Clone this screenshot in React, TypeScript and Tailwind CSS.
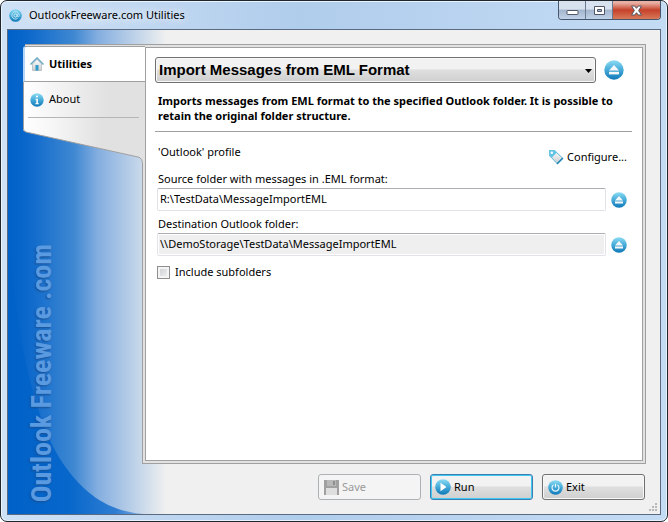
import { useState } from "react";

function EjectIcon({ className }: { className: string }) {
  return (
    <svg className={className} viewBox="0 0 20 20" aria-hidden="true">
      <circle cx="10" cy="10" r="9.7" fill="url(#aqua)" />
      <path d="M10 5 L15 10.6 H5 Z" fill="#f5f8fa" />
      <rect x="5" y="11.8" width="10" height="2.6" fill="#f5f8fa" />
    </svg>
  );
}

function SharedGradients() {
  return (
    <svg className="absolute size-0" aria-hidden="true">
      <defs>
        <linearGradient id="aqua" x1="0" y1="0" x2="0" y2="1">
          <stop offset="0" stopColor="#8cdcf4" />
          <stop offset="0.5" stopColor="#45aad8" />
          <stop offset="1" stopColor="#0f78b8" />
        </linearGradient>
        <linearGradient id="silver" x1="0" y1="0" x2="0" y2="1">
          <stop offset="0" stopColor="#ffffff" />
          <stop offset="1" stopColor="#c9ccce" />
        </linearGradient>
        <linearGradient id="tabFill" x1="0" y1="0" x2="1" y2="0">
          <stop offset="0" stopColor="#ffffff" />
          <stop offset="0.25" stopColor="#f6f6f6" />
          <stop offset="0.65" stopColor="#e1e1e1" />
          <stop offset="1" stopColor="#e1e1e1" />
        </linearGradient>
        <linearGradient id="swoosh" x1="0" y1="0" x2="1" y2="0">
          <stop offset="0" stopColor="#0061c8" />
          <stop offset="0.45" stopColor="#0767cb" />
          <stop offset="0.8" stopColor="#2f7dd2" />
          <stop offset="1" stopColor="#80ace0" />
        </linearGradient>
      </defs>
    </svg>
  );
}

function TitleBar() {
  return (
    <header className="flex h-[28px] items-start justify-between pl-[8px] pr-[6px]">
      <div className="flex h-[28px] items-center gap-[7px]">
        <svg className="size-[13px]" viewBox="0 0 13 13" aria-hidden="true">
          <circle cx="6.5" cy="6.5" r="6.3" fill="url(#aqua)" />
          <circle cx="6.5" cy="6.5" r="1.6" fill="none" stroke="#d5f0fb" />
          <path d="M8.2 4.8v2.3c0 1.3 2 1 2-.7a3.7 3.7 0 1 0-1.7 3.1" fill="none" stroke="#d5f0fb" strokeWidth="0.8" />
        </svg>
        <h1 className="[text-shadow:0_0_8px_#ffffff,0_0_12px_#ffffff]">OutlookFreeware.com Utilities</h1>
      </div>
      <div className="flex h-[19px] overflow-hidden rounded-b-[4px] border border-t-0 border-[#46566c]">
        <button aria-label="Minimize" className="flex w-[27px] items-center justify-center border-r border-[#6a7a90] bg-linear-to-b from-[#d8e2ee] from-45% via-[#a3b5cc] via-50% to-[#c0d2e8]">
          <svg className="h-[13px] w-[13px]" viewBox="0 0 13 13"><rect x="1" y="6.5" width="11" height="4" rx="0.5" fill="#fff" stroke="#535666" /></svg>
        </button>
        <button aria-label="Maximize" className="flex w-[27px] items-center justify-center border-r border-[#6a7a90] bg-linear-to-b from-[#d8e2ee] from-45% via-[#a3b5cc] via-50% to-[#c0d2e8]">
          <svg className="h-[13px] w-[13px]" viewBox="0 0 13 13"><path fillRule="evenodd" d="M1.5 2.5h10v8h-10zM4.5 5.5h4v2h-4z" fill="#fff" stroke="#535666" /></svg>
        </button>
        <button aria-label="Close" className="flex w-[47px] items-center justify-center bg-linear-to-b from-[#e8b0a4] from-10% via-[#c5402a] via-50% to-[#d87858]">
          <svg className="h-[13px] w-[13px]" viewBox="0 0 13 13"><path d="M1.5 2h3.2l1.8 2.300 1.800-2.300h3.200L8.600 6.500l2.900 4.500H8.300L6.500 8.700 4.700 11H1.500l2.900-4.500z" fill="#fff" stroke="#535666" /></svg>
        </button>
      </div>
    </header>
  );
}

function Sidebar() {
  return (
    <nav className="relative z-10 -mr-[3px] w-[122px] shrink-0">
      <div className="ml-[2px] h-[2px] border-t border-[#a0a0a0] bg-[#e1e1e1]" />
      <button className="flex h-[36px] w-full items-center gap-[5px] rounded-tl-[3px] border-y border-l-2 border-y-[#a0a0a0] border-l-[#b5d6f8] bg-white pl-[5px] font-bold">
        <svg className="size-[14px]" viewBox="0 0 14 14" aria-hidden="true">
          <path d="M2.500 7v6.500h9V7L7 2.500z" fill="url(#silver)" stroke="#a4abb0" strokeWidth="0.600" />
          <path d="M0.500 7.500 7 1l6.500 6.500" fill="none" stroke="#6da9c4" strokeWidth="1.500" />
          <path d="M5.500 8h3v5.500h-3z" fill="#2f9bcb" />
        </svg>
        Utilities
      </button>
      <div className="border-l border-[#a0a0a0] bg-linear-to-r from-white via-[#e1e1e1] via-70% to-[#e1e1e1] pl-[4px]">
        <button className="flex h-[36px] w-[111px] items-center gap-[5px] border-b border-[#b5b5b5] pl-[2px]">
          <svg className="size-[14px]" viewBox="0 0 14 14" aria-hidden="true">
            <circle cx="7" cy="7" r="6.700" fill="url(#aqua)" />
            <circle cx="7" cy="3.500" r="1.100" fill="#fff" />
            <path d="M5.500 5.800h2.400v4.400h1v1H5.300v-1h1V6.800h-.8z" fill="#fff" />
          </svg>
          About
        </button>
      </div>
      <svg className="block h-[46px] w-full" viewBox="0 0 122 46" aria-hidden="true">
        <path d="M0 0V11Q0 13 3 14L115 39Q119 40 119 46H122V0Z" fill="url(#tabFill)" />
        <path d="M0.500 0V11Q0.500 13 3 14L115 39Q119.500 40 119.500 46" fill="none" stroke="#a0a0a0" />
      </svg>
    </nav>
  );
}

function FolderField({ id, label, value, readOnly }: { id: string; label: string; value: string; readOnly?: boolean }) {
  const [text, setText] = useState(value);
  return (
    <div className="mb-[4px] pl-[2px] pr-[5px]">
      <label htmlFor={id} className="block h-[18px] pl-px leading-[18px]">{label}</label>
      <div className="flex items-center gap-[5px]">
        <input
          id={id}
          value={text}
          readOnly={readOnly}
          onChange={(e) => setText(e.target.value)}
          className="h-[23px] min-w-0 flex-1 rounded-[2px] border border-[#e2e3ea] border-t-[#abadb3] bg-white px-[2px] pb-[2px] outline-none read-only:bg-[#efefef] read-only:shadow-[inset_0_0_0_1px_#ffffff]"
        />
        <button aria-label={`Choose: ${label}`}><EjectIcon className="size-[16px]" /></button>
      </div>
    </div>
  );
}

function Panel() {
  return (
    <section className="flex flex-1 border border-[#a0a0a0] bg-[#e1e1e1] p-[2px]">
      <div className="flex-1 border border-[#a0a0a0] bg-white pl-[9px] pr-[10px] pt-[9px]">
        <div className="flex items-center gap-[8px]">
          <div className="relative flex-1">
            <select aria-label="Utility" className="h-[26px] w-full appearance-none rounded-[3px] border border-[#707070] bg-linear-to-b from-[#f2f2f2] from-45% via-[#dfdfdf] via-50% to-[#cfcfcf] px-[3px] font-['Liberation_Sans',Arial,sans-serif] text-[15px] font-bold shadow-[inset_0_0_0_1px_#f8f8f8]">
              <option>Import Messages from EML Format</option>
            </select>
            <svg className="pointer-events-none absolute right-[4px] top-[12px] h-[4px] w-[7px]" viewBox="0 0 7 4" aria-hidden="true"><path d="M0 0h7L3.500 4z" fill="#000" /></svg>
          </div>
          <button className="mr-[8px]" aria-label="Choose utility"><EjectIcon className="size-[20px]" /></button>
        </div>
        <p className="border-b border-[#a0a0a0] pb-[8px] pl-[3px] pt-[10px] font-bold leading-[15px]">
          Imports messages from EML format to the specified Outlook folder. It is possible to retain the original folder structure.
        </p>
        <div className="flex h-[38px] justify-between pl-[3px] pr-[5px] pt-[12px]">
          <span className="leading-[16px]">'Outlook' profile</span>
          <button className="mt-[5px] flex h-[16px] items-center gap-[3px]">
            <svg className="size-[16px]" viewBox="0 0 16 16" aria-hidden="true">
              <path d="M1.500 1.500h5l8 7.500-5.500 5.500-7.500-8z" fill="url(#silver)" stroke="#5ab4d8" />
              <path d="M1 1h5.500l2.500 2.500L3.500 9 1 6.500z" fill="#66c4e4" />
              <circle cx="3.800" cy="3.800" r="1.200" fill="#fff" />
              <path d="m9 15 6-6" stroke="#1b82b4" strokeWidth="1.400" />
            </svg>
            Configure...
          </button>
        </div>
        <FolderField id="source" label="Source folder with messages in .EML format:" value="R:\TestData\MessageImportEML" />
        <FolderField id="destination" label="Destination Outlook folder:" value="\\DemoStorage\TestData\MessageImportEML" readOnly />
        <label className="mt-[8px] flex items-center gap-[5px] pl-[2px] leading-[16px]">
          <input type="checkbox" className="size-[13px] appearance-none border border-[#8e8f8f] bg-linear-to-br from-[#c8ccd2] to-[#f4f4f4] shadow-[inset_0_0_0_2px_#f4f4f4] checked:bg-[#3a8fc0]" />
          Include subfolders
        </label>
      </div>
    </section>
  );
}

function Actions() {
  return (
    <footer className="flex justify-end gap-[9px] pr-px">
      <button disabled className="flex h-[26px] w-[103px] items-center gap-[3px] rounded-[3px] border border-[#adb2b5] bg-[#f4f4f4] pl-[5px] text-[#9a9a9a]">
        <svg className="size-[15px]" viewBox="0 0 15 15" aria-hidden="true">
          <path d="M0 0h15v15H0z" fill="#a0a0a0" />
          <path d="M3 0h9v6H3z" fill="#b8b8b8" />
          <path d="M9 1h2v4H9z" fill="#8e8e8e" />
          <path d="M2 8h11v7H2z" fill="#dedede" />
        </svg>
        Save
      </button>
      <button className="flex h-[26px] w-[103px] items-center gap-[3px] rounded-[3px] border border-[#3c7fb1] bg-linear-to-b from-[#f2f2f2] from-45% via-[#dfdfdf] via-50% to-[#cfcfcf] pl-[4px] shadow-[inset_0_0_0_1px_#3fc8f4]">
        <svg className="size-[16px]" viewBox="0 0 16 16" aria-hidden="true">
          <circle cx="8" cy="8" r="7.800" fill="url(#aqua)" />
          <path d="M5.500 3.800 11.500 8l-6 4.200z" fill="#fff" />
        </svg>
        Run
      </button>
      <button className="flex h-[26px] w-[103px] items-center gap-[3px] rounded-[3px] border border-[#707070] bg-linear-to-b from-[#f2f2f2] from-45% via-[#dfdfdf] via-50% to-[#cfcfcf] pl-[5px] shadow-[inset_0_0_0_1px_#f8f8f8]">
        <svg className="size-[15px]" viewBox="0 0 16 16" aria-hidden="true">
          <circle cx="8" cy="8" r="7.800" fill="url(#aqua)" />
          <path d="M5.800 5.200a3.700 3.700 0 1 0 4.400 0M8 4v4" fill="none" stroke="#e4f5fc" strokeWidth="1.300" />
        </svg>
        Exit
      </button>
    </footer>
  );
}

export default function App() {
  return (
    <div className="bg-white">
      <SharedGradients />
      <div className="flex min-h-screen flex-col rounded-[7px] border border-[#20262e] bg-linear-to-r from-[#cfe1f5] via-[#b0cdec] via-45% to-[#c4dbf4] font-['Noto_Sans','Segoe_UI',sans-serif] text-[11px] text-black shadow-[inset_0_0_0_1px_#e8f4ff]">
        <TitleBar />
        <main className="relative mx-[6px] mb-[6px] flex flex-1 flex-col gap-[10px] overflow-hidden border border-[#5a6a80] bg-[linear-gradient(90deg,#0061c8_0px,#0a67cb_18px,#3f88d2_66px,#84aee0_90px,#c8d8ea_133px,#f0f0f0_158px)] pb-[14px] pl-[15px] pr-[14px] pt-[14px]">
          <svg className="absolute bottom-0 left-0 h-[290px] w-[135px]" viewBox="0 0 135 290" aria-hidden="true">
            <path d="M0 0C8 120 28 195 52 235C75 270 100 287 135 290H0Z" fill="url(#swoosh)" />
          </svg>
          <div className="relative flex flex-1">
            <Sidebar />
            <Panel />
          </div>
          <div className="absolute bottom-[12px] left-[14px] rotate-180 font-['Roboto_Condensed','Open_Sans_Condensed','Liberation_Sans_Narrow',Roboto,sans-serif] text-[28px] font-bold leading-[40px] text-[#5a9ae0] [text-shadow:-1px_-1px_2px_#1a4f90] [writing-mode:vertical-rl]">
            Outlook Freeware .com
          </div>
          <Actions />
          <svg className="absolute bottom-[2px] right-[2px] size-[9px]" viewBox="0 0 9 9" fill="#b8b8b8" aria-hidden="true">
            <path d="M6 0h2v2H6zM3 3h2v2H3zM6 3h2v2H6zM0 6h2v2H0zM3 6h2v2H3zM6 6h2v2H6z" />
          </svg>
        </main>
      </div>
    </div>
  );
}
